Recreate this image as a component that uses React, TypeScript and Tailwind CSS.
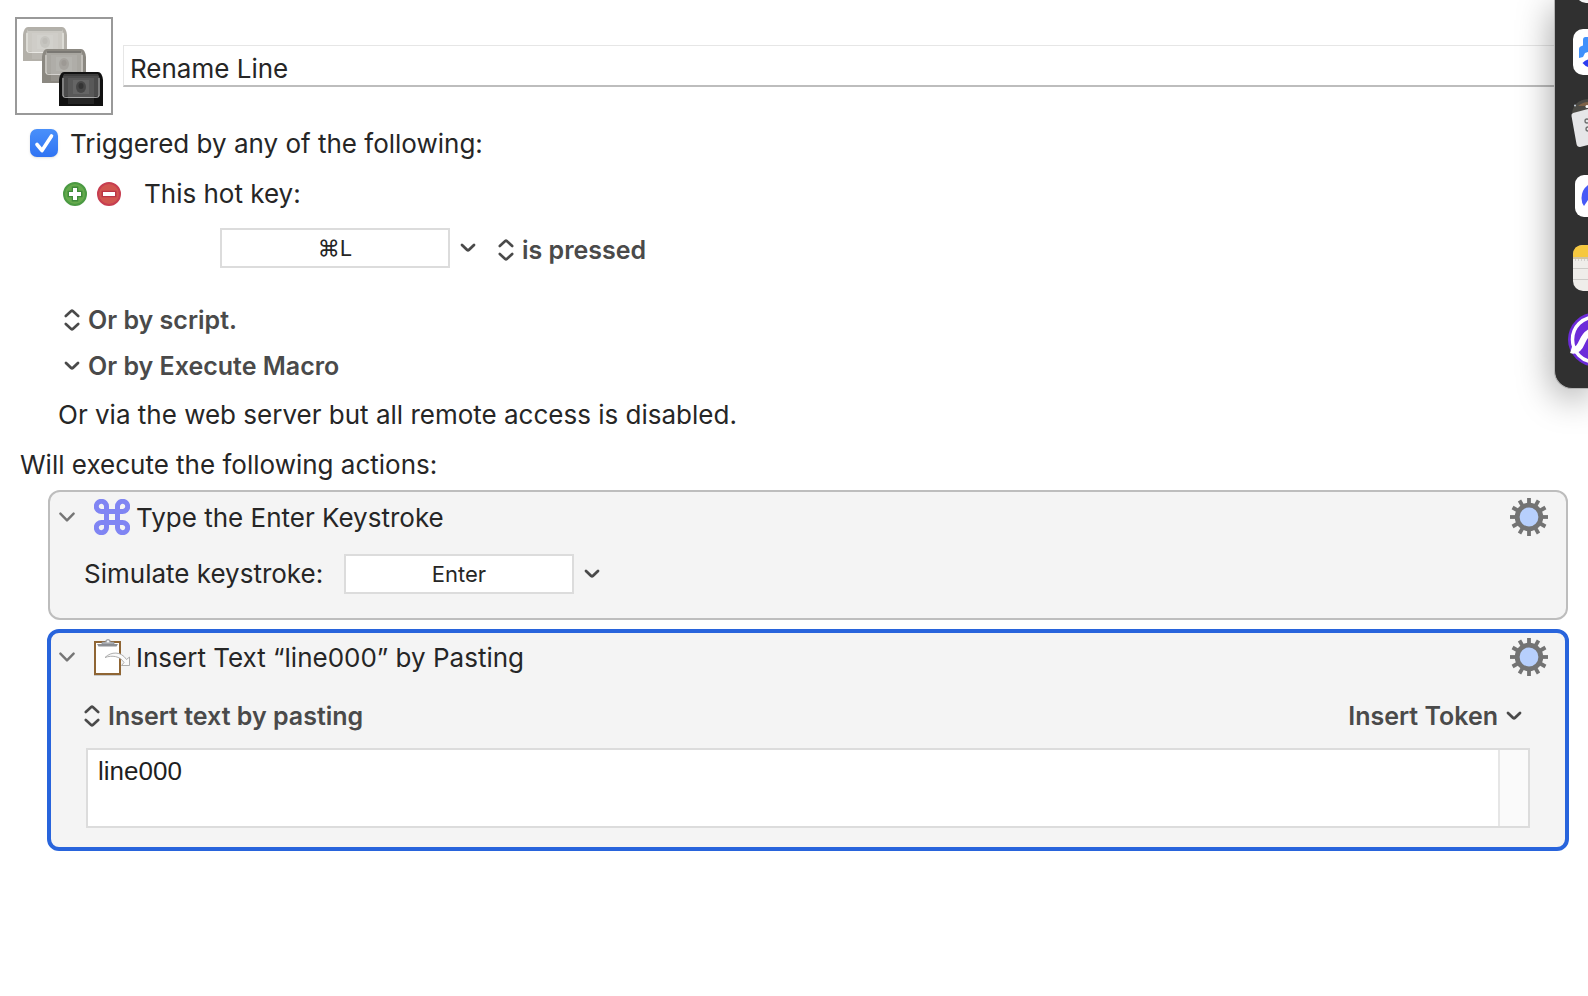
import React, { useState } from 'react';

const ChevronDown: React.FC<{ thin?: boolean }> = ({ thin }) => (
  <svg width="16" height="10" viewBox="0 0 16 10" fill="none" stroke={thin ? '#757575' : '#4a4a4a'} strokeWidth={thin ? 2.4 : 2.8} strokeLinecap="round" strokeLinejoin="round" aria-hidden="true">
    <path d={thin ? 'M1.4 1.6 8 8.4 14.6 1.6' : 'M2 2 7.2 7q.8.7 1.6 0L14 2'} />
  </svg>
);

const ChevronUpDown = () => (
  <svg width="16" height="22" viewBox="0 0 16 22" fill="none" stroke="#4a4a4a" strokeWidth="2.6" strokeLinecap="round" strokeLinejoin="round" aria-hidden="true">
    <path d="M1.8 7 7.2 2q.8-.7 1.6 0l5.4 5M1.8 15l5.4 5q.8.7 1.6 0l5.4-5" />
  </svg>
);

const Gear = () => (
  <svg width="38" height="38" viewBox="-19 -19 38 38" aria-hidden="true">
    {Array.from({ length: 12 }, (_, i) => (
      <rect key={i} x="-1.9" y="-19" width="3.8" height="7" fill="#737373" transform={`rotate(${i * 30})`} />
    ))}
    <circle r="11.8" fill="#b7cffc" stroke="#737373" strokeWidth="4.8" />
  </svg>
);

const CommandIcon = () => (
  <svg width="36" height="36" viewBox="0 0 36 36" fill="none" stroke="#8085f3" strokeWidth="5" aria-hidden="true">
    <path d="M12.5 12.5h11v11h-11zM12.5 12.5H7.7a5.1 5.1 0 1 1 4.8-4.8zM23.5 12.5V7.7a5.1 5.1 0 1 1 4.8 4.8zM23.5 23.5h4.8a5.1 5.1 0 1 1-4.8 4.8zM12.5 23.5v4.8a5.1 5.1 0 1 1-4.8-4.8z" />
  </svg>
);

const ClipboardIcon = () => (
  <svg width="37" height="37" viewBox="0 0 37 37" aria-hidden="true">
    <rect x="0" y="4" width="27" height="33" fill="#9b9b9b" opacity=".5" />
    <rect x="1" y="3" width="25" height="32" fill="#fff" stroke="#8f6534" strokeWidth="2" />
    <path d="M3 5h21l-1.5 2.5h-18z" fill="#8d9095" />
    <path d="M8 5V3h3.5a2.500 2.500 0 0 1 5 0H20v2z" fill="#b9bcc0" stroke="#85888c" strokeWidth=".7" />
    <circle cx="14" cy="2.6" r="1" fill="#fff" />
    <path d="M11 18.5C17 12.500 27 12 32.500 20.500L35.500 18V26.500H27.500L30 23.500C26 17 18 16 11 18.500Z" fill="#fafafa" stroke="#a5a5a5" strokeWidth=".9" strokeLinejoin="round" />
  </svg>
);

// One key cap of the macro group icon
const KeyCap: React.FC<{ x: number; y: number; edge: string; face: string; top: string; shine: string }> = ({ x, y, edge, face, top, shine }) => (
  <g transform={`translate(${x} ${y})`}>
    <path d="M0 34V8Q1 0 5 0H39Q43 0 44 8V34Z" fill={edge} />
    <path d="M5 2H39L41 7V24Q22 28 3 24V7Z" fill={face} />
    <path d="M5 3H39" stroke={top} strokeWidth="1.5" />
    <path d="M4 6V23Q4 25.500 7 25.500H37Q40 25.500 40 23V6" fill="none" stroke={shine} strokeWidth="1.1" opacity=".8" />
    <rect x="9" y="6" width="26" height="26" fill={shine} opacity=".12" />
    <rect x="14" y="8" width="16" height="14" fill={shine} opacity=".12" />
    <ellipse cx="22" cy="15" rx="5" ry="6" fill={edge} opacity=".35" />
    <ellipse cx="22" cy="14" rx="2.5" ry="3" fill={edge} opacity=".35" />
  </g>
);

const MacroIcon = () => (
  <svg width="94" height="94" viewBox="0 0 94 94" aria-hidden="true">
    <KeyCap x={6} y={8} edge="#b3b0a9" face="#cbc9c3" top="#aaa8a3" shine="#f2f1ee" />
    <KeyCap x={25} y={30} edge="#8b8881" face="#a9a7a1" top="#6b6964" shine="#e2e0dc" />
    <KeyCap x={42} y={53} edge="#111111" face="#4c4c4c" top="#3a3a3a" shine="#c0c0c0" />
  </svg>
);

const DockIcons = () => (
  <svg width="33" height="388" viewBox="-1 0 33 388" aria-hidden="true">
    <rect x="20" y="-43" width="46" height="46" rx="10" fill="#f4f4f4" />

    <rect x="17" y="29" width="46" height="46" rx="10" fill="#fff" />
    <path d="M32 37H29.500Q27 37 27 40V45.500L24.500 46.500Q23 47 23 49V58L27 57L29 53L32 52Z" fill="#3f90fb" />
    <path d="M32 59.500Q29 60 26.500 63Q29 66 32 67Z" fill="#2c3cf0" />

    <path d="M16 113Q18 100 32 99V116Z" fill="#4b4a45" />
    <path d="M22 106Q27 102 32 102V106Z" fill="#7d6247" />
    <circle cx="19" cy="105.500" r="1" fill="#c9d2dc" />
    <circle cx="31" cy="106.500" r="1.500" fill="#fff" />
    <path d="M17 113L32 109V145L24 147Q21 147 20.500 144L15.500 116Q15 114 17 113Z" fill="#e6e6e8" />
    <circle cx="31" cy="121" r="2" fill="none" stroke="#6d6d6d" strokeWidth="1.3" />
    <circle cx="32" cy="129" r="2" fill="none" stroke="#6d6d6d" strokeWidth="1.3" />

    <rect x="19" y="175" width="46" height="42" rx="9" fill="#fff" />
    <path d="M32 185Q25.500 190 25.500 198Q25.500 203 28 206L32 200Z" fill="#4659f6" />

    <rect x="17" y="245" width="46" height="46" rx="10" fill="#efedea" />
    <path d="M17 257V255Q17 245 27 245H32V257Z" fill="#f6c83f" />
    <path d="M17 258H32" stroke="#b39a5a" />
    <path d="M19 260H32" stroke="#b5b3af" strokeDasharray="1 2" />
    <path d="M17 268.5H32M17 279.5H32" stroke="#cdcbc8" />

    <circle cx="39" cy="339.5" r="27" fill="#6c2bd9" />
    <circle cx="39" cy="339.5" r="22.5" fill="none" stroke="#fff" strokeWidth="3.5" />
    <path d="M15 350Q22 352 26 342Q29 335 34 332" fill="none" stroke="#fff" strokeWidth="6.5" />
  </svg>
);

interface PopupProps {
  label: string;
  value: string;
}

const Popup: React.FC<PopupProps> = ({ label, value }) => (
  <label className="flex items-center gap-2 font-semibold text-[#4a4a4a]">
    <ChevronUpDown />
    <select aria-label={label} className="appearance-none bg-transparent text-[25px] leading-[30px] outline-none">
      <option>{value}</option>
    </select>
  </label>
);

const KeyField: React.FC<PopupProps> = ({ label, value }) => (
  <div className="flex items-center gap-2">
    <input aria-label={label} defaultValue={value} className="h-10 w-[230px] border-2 border-[#dcdcdc] bg-white text-center text-[22px] outline-none" />
    <button type="button" aria-label={`${label} menu`} className="p-0.5">
      <ChevronDown />
    </button>
  </div>
);

interface ActionHeaderProps {
  title: string;
  icon: React.ReactNode;
}

const ActionHeader: React.FC<ActionHeaderProps> = ({ title, icon }) => (
  <div className="flex h-[38px] items-center">
    <button type="button" aria-label="Collapse action">
      <ChevronDown thin />
    </button>
    <span className="ml-[19px] w-[37px]">{icon}</span>
    <h2 className="ml-[5px] pt-0.5">{title}</h2>
    <button type="button" aria-label="Action options" className="ml-auto">
      <Gear />
    </button>
  </div>
);

const App = () => {
  const [enabled, setEnabled] = useState(true);
  const [text, setText] = useState('line000');

  return (
    <div className="relative min-h-screen overflow-hidden bg-white pt-[17px] font-['Inter',sans-serif] text-[26px] leading-[30px] text-[#262626]">
      <header className="flex items-start gap-2.5 pl-[15px]">
        <div className="shrink-0 border-2 border-[#999999]">
          <MacroIcon />
        </div>
        <input aria-label="Macro name" defaultValue="Rename Line" className="mt-7 h-[42px] min-w-0 flex-1 border border-b-2 border-[#e6e6e6] border-b-[#bdbdbd] px-1.5 pt-1.5 outline-none" />
      </header>

      <section className="mt-3.5">
        <label className="flex items-center gap-3 pl-[30px]">
          <span className="mb-0.5 grid">
            <input type="checkbox" checked={enabled} onChange={() => setEnabled(!enabled)} className="col-start-1 row-start-1 size-7 appearance-none rounded-[7px] bg-white shadow checked:bg-linear-to-b checked:from-[#4a90fa] checked:to-[#2f73f3]" />
            {enabled && (
              <svg className="pointer-events-none col-start-1 row-start-1" width="28" height="28" viewBox="0 0 28 28" fill="none" stroke="#fff" strokeWidth="3.6" strokeLinecap="round" strokeLinejoin="round" aria-hidden="true">
                <path d="M7 15.5 12 21.5 21.5 7" />
              </svg>
            )}
          </span>
          Triggered by any of the following:
        </label>

        <div className="mt-5 flex items-center pl-[63px]">
          <button type="button" aria-label="Add trigger">
            <svg width="24" height="24" viewBox="0 0 24 24" aria-hidden="true">
              <circle cx="12" cy="12" r="11" fill="#65aa4c" stroke="#4b9a43" strokeWidth="2" />
              <path d="M12 4.5v15M4.5 12h15" stroke="#3f8a3a" strokeWidth="6.5" />
              <path d="M12 6v12M6 12h12" stroke="#fff" strokeWidth="4" />
            </svg>
          </button>
          <button type="button" aria-label="Remove trigger" className="ml-2.5">
            <svg width="24" height="24" viewBox="0 0 24 24" aria-hidden="true">
              <circle cx="12" cy="12" r="11" fill="#d15650" stroke="#c73e50" strokeWidth="2" />
              <path d="M4.5 12h15" stroke="#bb3545" strokeWidth="6.5" />
              <path d="M6 12h12" stroke="#fff" strokeWidth="4" />
            </svg>
          </button>
          <span className="ml-[23px]">This hot key:</span>
        </div>

        <div className="mt-[19px] flex items-center gap-5 pl-[220px]">
          <KeyField label="Hot key" value="⌘L" />
          <div className="pt-1">
            <Popup label="Hot key event" value="is pressed" />
          </div>
        </div>

        <div className="mt-[37px] flex pl-16">
          <Popup label="Script trigger" value="Or by script." />
        </div>
        <button type="button" className="mt-4 flex items-center gap-2 pl-16 text-[25px] leading-[30px] font-semibold text-[#4a4a4a]">
          <ChevronDown />
          Or by Execute Macro
        </button>
        <p className="mt-[19px] pl-[58px]">Or via the web server but all remote access is disabled.</p>
      </section>

      <section className="mt-5">
        <p className="pl-5">Will execute the following actions:</p>

        <article className="mt-2.5 mr-5 ml-12 rounded-xl border-2 border-[#bdbdbd] bg-[#f4f4f4] pt-1.5 pr-[18px] pb-6 pl-[9px]">
          <ActionHeader title="Type the Enter Keystroke" icon={<CommandIcon />} />
          <div className="mt-[18px] flex items-center pl-[25px]">
            <span className="w-[260px]">Simulate keystroke:</span>
            <KeyField label="Keystroke" value="Enter" />
          </div>
        </article>

        <article className="mt-[9px] mr-[19px] ml-[47px] rounded-xl border-4 border-[#2864dc] bg-[#f4f4f4] pt-[5px] pr-[17px] pb-[19px] pl-2">
          <ActionHeader title="Insert Text “line000” by Pasting" icon={<ClipboardIcon />} />
          <div className="mt-[25px] mr-[18px] flex items-center justify-between pr-2 pl-[25px]">
            <Popup label="Insert method" value="Insert text by pasting" />
            <button type="button" className="flex items-center gap-2 text-[25px] leading-[30px] font-semibold text-[#4a4a4a]">
              Insert Token
              <ChevronDown />
            </button>
          </div>
          <div className="mt-[17px] mr-[18px] ml-[27px] flex h-20 border-2 border-[#dcdcdc] bg-white">
            <textarea aria-label="Text to insert" value={text} onChange={(e) => setText(e.target.value)} className="flex-1 resize-none px-2.5 pt-1.5 font-['Liberation_Sans',sans-serif] text-[26px] text-[#1f1f1f] outline-none" />
            <div className="w-[30px] border-l-2 border-[#e6e6e6] bg-[#fafafa]" />
          </div>
        </article>
      </section>

      <aside className="absolute top-0 right-0 overflow-hidden rounded-bl-[18px] border-b border-l border-[#b5b5b5] bg-[#303030] shadow-[0_8px_36px_rgba(0,0,0,0.4)]">
        <DockIcons />
      </aside>
    </div>
  );
};

export default App;
